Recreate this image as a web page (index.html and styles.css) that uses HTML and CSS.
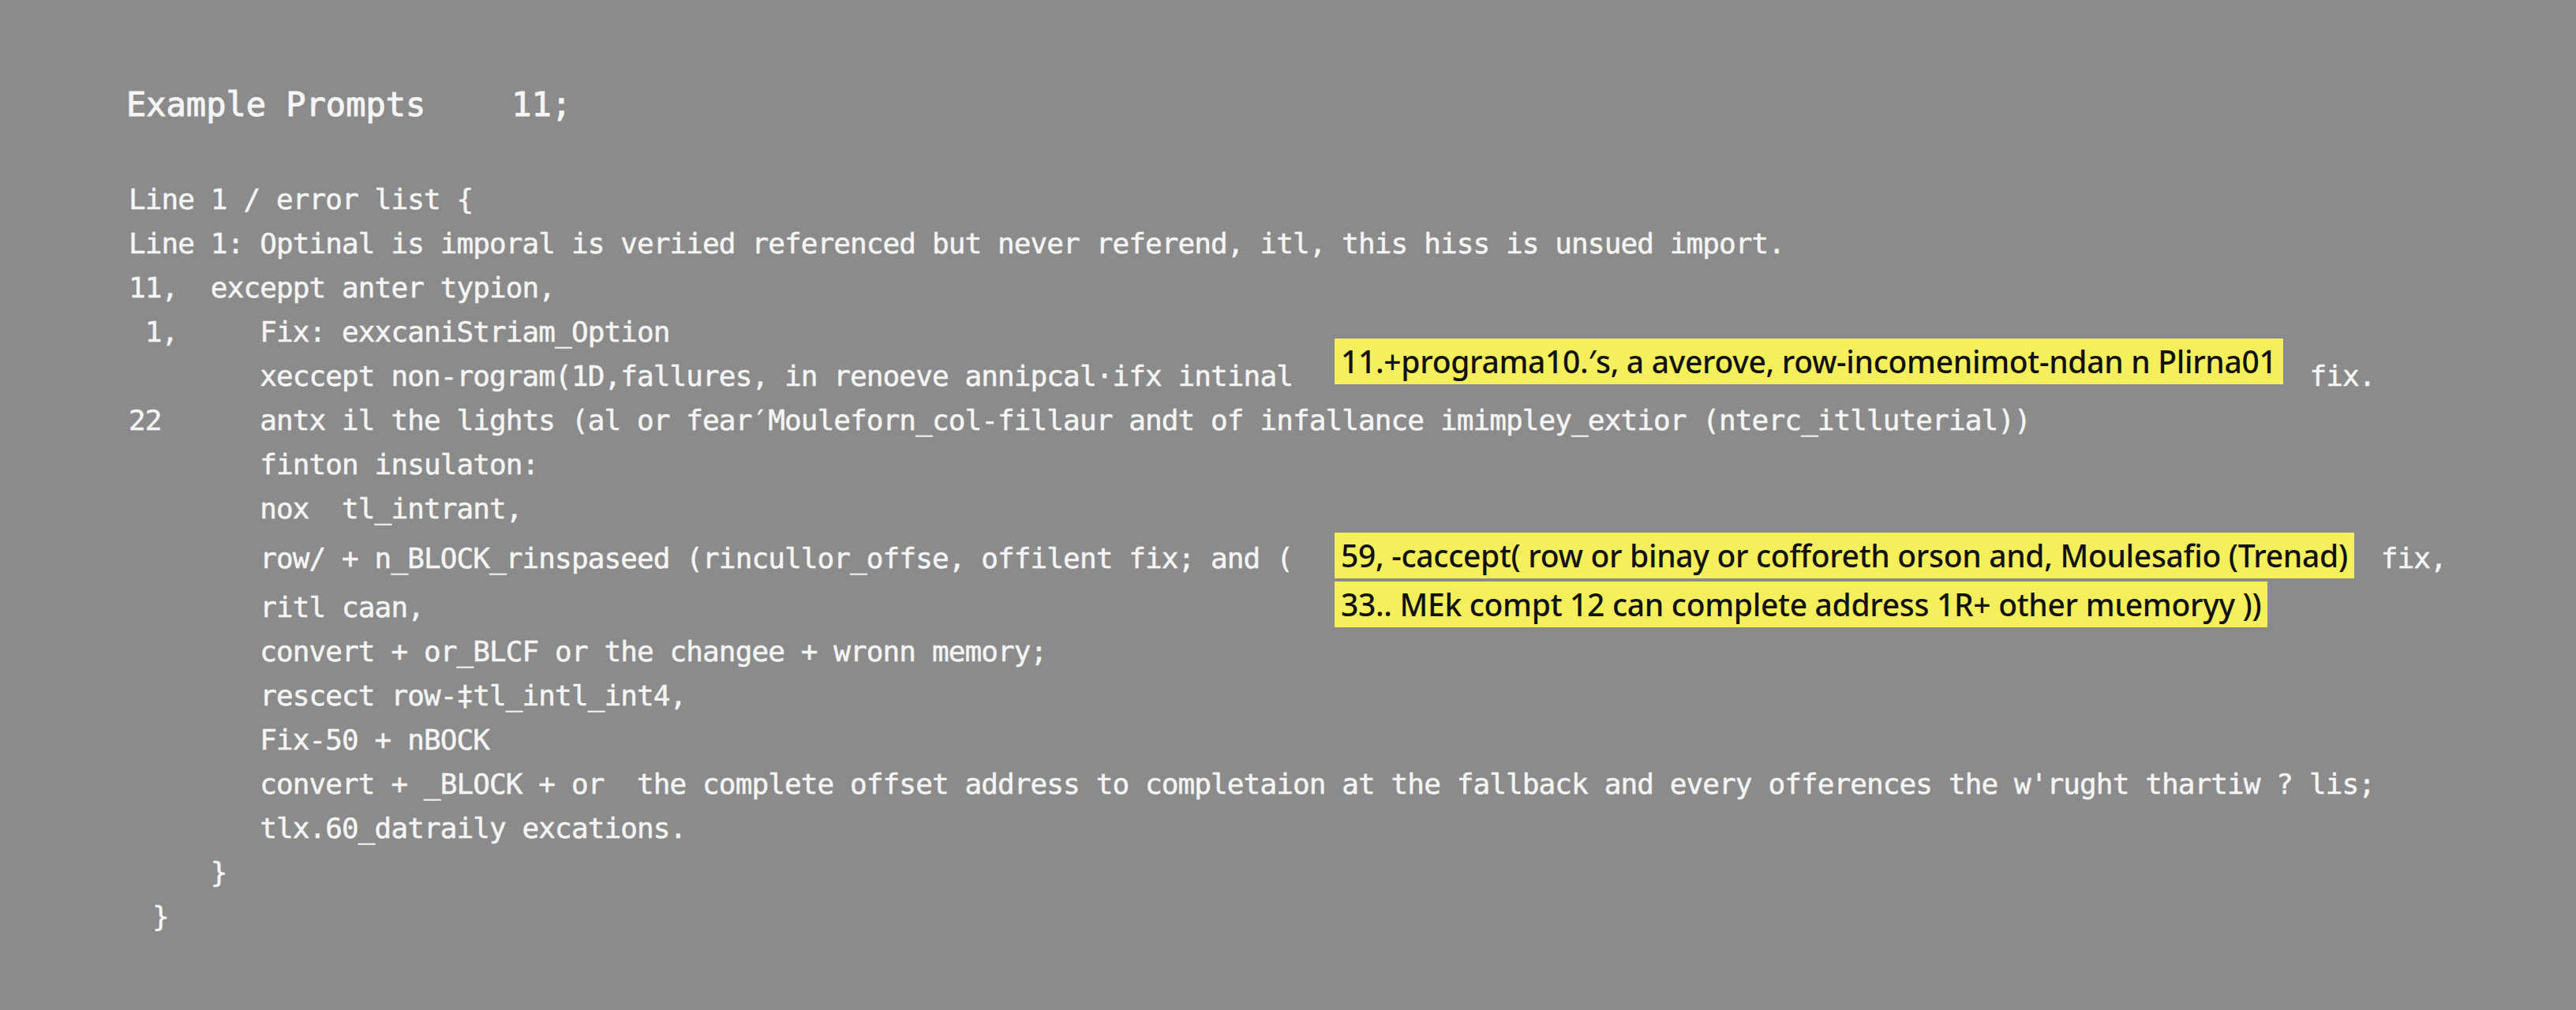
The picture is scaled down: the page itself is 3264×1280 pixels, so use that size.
FILE: index.html
```html
<!DOCTYPE html>
<html lang="en">
<head>
<meta charset="utf-8">
<title>Example Prompts</title>
<link rel="stylesheet" href="styles.css">
</head>
<body>
<main class="page">
  <header class="title-row">
    <h1 class="title">Example Prompts</h1>
    <span class="title-count">11;</span>
  </header>
  <section class="code">
    <div class="line">Line 1 / error list {</div>
    <div class="line">Line 1: Optinal is imporal is veriied referenced but never referend, itl, this hiss is unsued import.</div>
    <div class="line">11,  exceppt anter typion,</div>
    <div class="line"> 1,     Fix: exxcaniStriam_Option</div>
    <div class="line"><span class="code-text">        xeccept non-rogram(1D,fallures, in renoeve annipcal·ifx intinal</span><span class="hl hl-raised">11.+programa10.′s, a averove, row-incomenimot-ndan n Plirna01</span><span class="after">fix.</span></div>
    <div class="line">22      antx il the lights (al or fear′Mouleforn_col-fillaur andt of infallance imimpley_extior (nterc_itlluterial))</div>
    <div class="line">        finton insulaton:</div>
    <div class="line">        nox  tl_intrant,</div>
    <div class="line line-hl-a"><span class="code-text">        row/ + n_BLOCK_rinspaseed (rincullor_offse, offilent fix; and (</span><span class="hl hl-lift">59, -caccept( row or binay or cofforeth orson and, Moulesafio (Trenad)</span><span class="after">fix,</span></div>
    <div class="line line-hl-b"><span class="code-text">        ritl caan,</span><span class="hl hl-lift">33.. MEk compt 12 can complete address 1R+ other mιemoryy ))</span></div>
    <div class="line">        convert + or_BLCF or the changee + wronn memory;</div>
    <div class="line">        rescect row-‡tl_intl_int4,</div>
    <div class="line">        Fix-50 + nBOCK</div>
    <div class="line">        convert + _BLOCK + or  the complete offset address to completaion at the fallback and every offerences the w'rught thartiw ? lis;</div>
    <div class="line">        tlx.60_datraily excations.</div>
    <div class="line">     }</div>
    <div class="line"><span class="brace-outer">}</span></div>
  </section>
</main>
</body>
</html>
```

FILE: styles.css
```css
html, body {
  margin: 0;
  padding: 0;
}

body {
  background: #8b8b8b;
  color: #f5f5f5;
  font-family: "DejaVu Sans Mono", "Liberation Mono", monospace;
  width: 3264px;
  height: 1280px;
  overflow: hidden;
}

.page {
  padding: 108px 0 0 160px;
}

.title-row {
  display: flex;
  align-items: baseline;
  gap: 109px;
  height: 50px;
  line-height: 50px;
  margin: 0 0 67px 0;
  -webkit-text-stroke: 1px currentColor;
}

.title {
  margin: 0;
  font-size: 42px;
  font-weight: normal;
  line-height: 50px;
}

.title-count {
  font-size: 42px;
}

.code {
  padding-left: 3px;
  font-size: 36px;
  letter-spacing: -0.9px;
  -webkit-text-stroke: 0.5px currentColor;
}

.line {
  display: flex;
  align-items: center;
  height: 56px;
  line-height: 56px;
  white-space: pre;
}

.line-hl-a {
  margin-top: 7px;
}

.line-hl-b {
  margin-top: 6px;
}

.code-text {
  flex: none;
  width: 1528px;
}

.hl {
  flex: none;
  box-sizing: border-box;
  height: 58px;
  line-height: 58px;
  padding: 0 8px;
  background: #f4ef5b;
  color: #111111;
  font-family: "Noto Sans", "Open Sans", sans-serif;
  font-size: 39px;
  font-weight: 500;
  letter-spacing: -0.3px;
  -webkit-text-stroke: 0;
  white-space: pre;
}

.hl-raised {
  margin-bottom: 38px;
}

.hl-lift {
  margin-bottom: 8px;
}

.after {
  margin-left: 34px;
}

.brace-outer {
  padding-left: 30px;
}
```
